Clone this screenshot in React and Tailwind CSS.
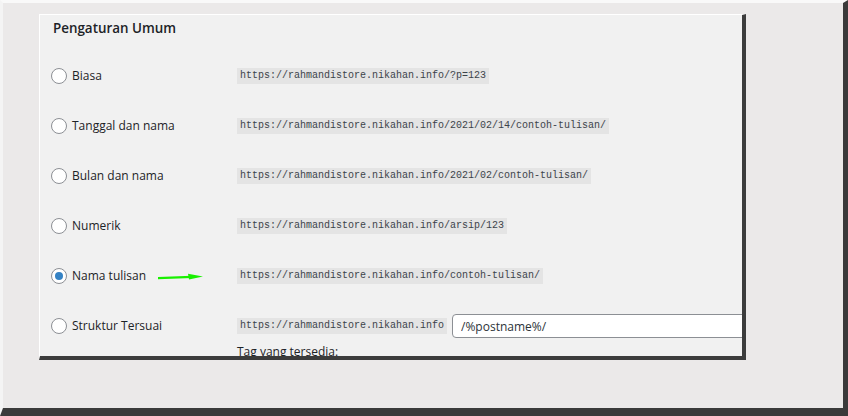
import React from "react";

const rows = [
  { label: "Biasa", url: "https://rahmandistore.nikahan.info/?p=123" },
  { label: "Tanggal dan nama", url: "https://rahmandistore.nikahan.info/2021/02/14/contoh-tulisan/" },
  { label: "Bulan dan nama", url: "https://rahmandistore.nikahan.info/2021/02/contoh-tulisan/" },
  { label: "Numerik", url: "https://rahmandistore.nikahan.info/arsip/123" },
  { label: "Nama tulisan", url: "https://rahmandistore.nikahan.info/contoh-tulisan/", checked: true },
];

function Radio({ checked }) {
  return (
    <span className="w-4 h-4 shrink-0 rounded-full border border-[#8c8f94] bg-white flex items-center justify-center">
      {checked && <span className="w-2 h-2 rounded-full bg-[#3582c4]" />}
    </span>
  );
}

function Code({ children }) {
  return (
    <code className="shrink-0 bg-[#e4e4e4] px-[3px] h-4 leading-4 text-[10px] text-[#3c434a] font-['Liberation_Mono',monospace] whitespace-nowrap">
      {children}
    </code>
  );
}

// green annotation arrow next to the selected option
function Arrow() {
  return (
    <svg width="46" height="8" viewBox="0 0 46 8" className="ml-auto mr-[33px] mt-[2px]">
      <path d="M0 5.2 L34 3.8" stroke="#19f000" strokeWidth="2.2" strokeLinecap="round" />
      <path d="M30 0.8 L45 3.6 L31 6.6 Z" fill="#19f000" />
    </svg>
  );
}

export default function App() {
  return (
    <div className="w-[848px] h-[416px] bg-[#ebe9e9] border-t-[3px] border-l-[3px] border-t-[#f9f9f9] border-l-[#f4f4f4] border-r-[5px] border-b-[8px] border-r-[#3a3a3a] border-b-[#3a3a3a] overflow-hidden font-['Segoe_UI','Open_Sans',sans-serif] text-[#1d2327]">
      <div className="ml-[36px] mt-[11px] w-[707px] h-[346px] bg-[#f1f1f1] border-t border-l border-white border-r-4 border-b-4 border-r-[#3c3c3c] border-b-[#3c3c3c] overflow-hidden">
        <h2 className="pl-[13px] pt-[3px] text-[13.4px] leading-5 font-semibold">Pengaturan Umum</h2>

        <div className="mt-[13px] flex flex-col">
          {rows.map((r) => (
            <div key={r.label} className="h-[50px] flex items-center">
              <div className="w-[197px] shrink-0 pl-[11px] flex items-center">
                <Radio checked={r.checked} />
                <span className="ml-[5px] text-[12px]">{r.label}</span>
                {r.checked && <Arrow />}
              </div>
              <Code>{r.url}</Code>
            </div>
          ))}

          <div className="mt-[13px] flex items-start">
            <div className="w-[197px] shrink-0 pl-[11px] h-6 flex items-center">
              <Radio />
              <span className="ml-[5px] text-[12px] whitespace-nowrap">Struktur Tersuai</span>
            </div>
            <div className="flex flex-col">
              <div className="flex items-center">
                <Code>https://rahmandistore.nikahan.info</Code>
                <input
                  readOnly
                  value="/%postname%/"
                  className="ml-[5px] w-[420px] shrink-0 h-6 px-2 rounded border border-[#8c8f94] bg-white text-[12px] text-[#2c3338] outline-none"
                />
              </div>
              <p className="mt-[5px] text-[12px] leading-[18px]">Tag yang tersedia:</p>
            </div>
          </div>
        </div>
      </div>
    </div>
  );
}
